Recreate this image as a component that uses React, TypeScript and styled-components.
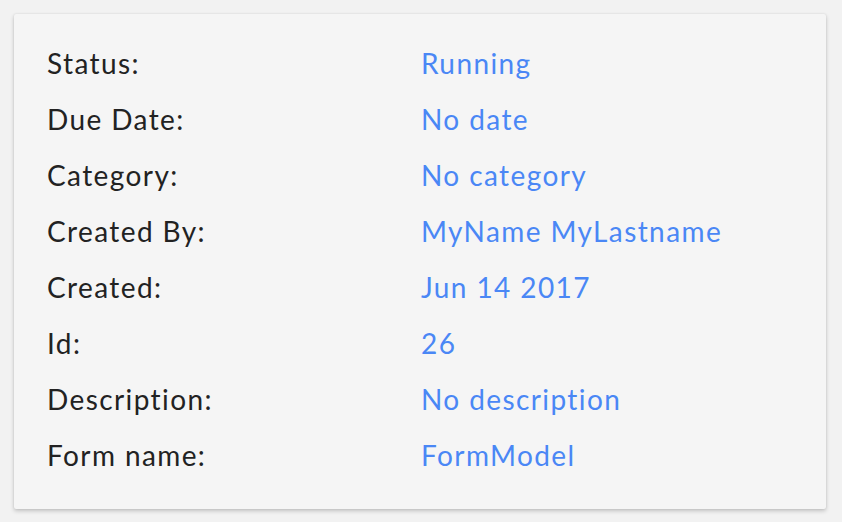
import React from "react";
import styled, { createGlobalStyle } from "styled-components";

const GlobalStyle = createGlobalStyle`
  html, body {
    margin: 0;
    padding: 0;
    background: #f2f2f2;
    font-family: Lato, "Noto Sans", sans-serif;
  }
`;

const Page = styled.div`
  padding: 14px 16px 13px 14px;
  box-sizing: border-box;
  width: 842px;
  height: 522px;
`;

const Card = styled.section`
  background: #f5f5f5;
  box-shadow: 0 2px 4px rgba(0, 0, 0, 0.2), 0 0 2px rgba(0, 0, 0, 0.1);
  border-radius: 2px;
  padding: 21px 33px 26px 33px;
  height: 100%;
  box-sizing: border-box;
`;

const Grid = styled.dl`
  margin: 0;
  display: grid;
  grid-template-columns: 374px 1fr;
  grid-auto-rows: 56px;
  align-items: center;
`;

const Label = styled.dt`
  margin: 0;
  font-size: 28px;
  letter-spacing: 1.4px;
  color: #222222;
`;

const Value = styled.dd`
  margin: 0;
  font-size: 28px;
  letter-spacing: 1.4px;
  color: #4a87f5;
`;

const rows: [string, string][] = [
  ["Status:", "Running"],
  ["Due Date:", "No date"],
  ["Category:", "No category"],
  ["Created By:", "MyName MyLastname"],
  ["Created:", "Jun 14 2017"],
  ["Id:", "26"],
  ["Description:", "No description"],
  ["Form name:", "FormModel"],
];

export default function App() {
  return (
    <>
      <GlobalStyle />
      <Page>
        <Card>
          <Grid>
            {rows.map(([k, v]) => (
              <React.Fragment key={k}>
                <Label>{k}</Label>
                <Value>{v}</Value>
              </React.Fragment>
            ))}
          </Grid>
        </Card>
      </Page>
    </>
  );
}
